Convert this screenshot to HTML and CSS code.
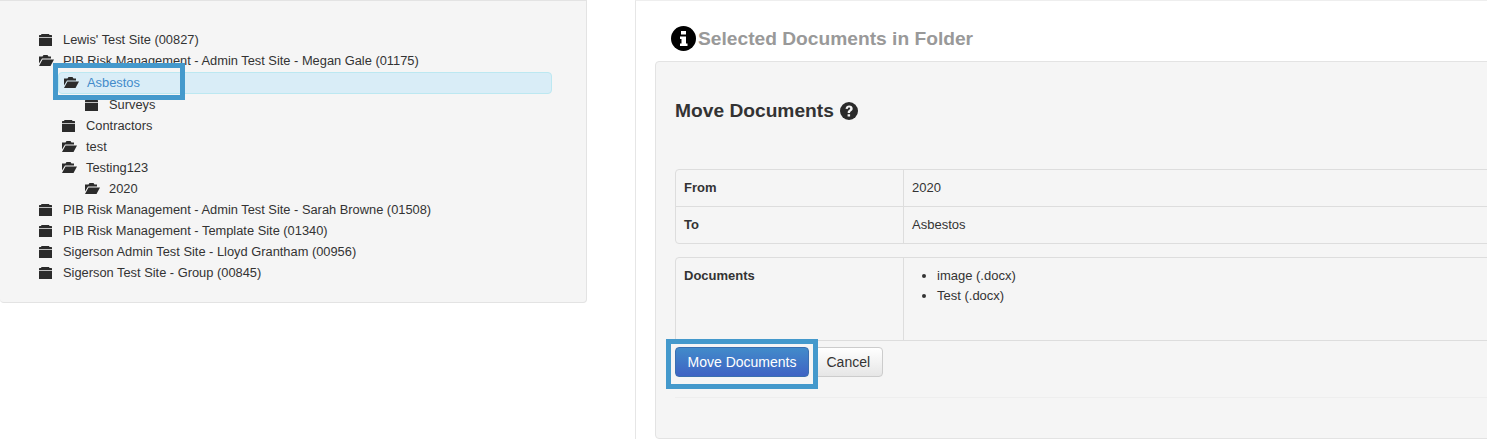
FILE: index.html
```html
<!DOCTYPE html>
<html lang="en">
<head>
  <meta charset="UTF-8" />
  <title>Move Documents</title>
  <link rel="stylesheet" href="styles.css">
</head>
<body>
  <svg class="defs" width="0" height="0">
    <symbol id="closed" viewBox="0 0 13 12">
      <path d="M2.500 0h7.500l.5 1H12.500l.5.500V3H0V1.500L.5 1h1.500zM0 3.800h13V12H0z" fill="#2b2b2b"/>
    </symbol>
    <symbol id="open" viewBox="0 0 15 11">
      <path d="M0 1.500h3.500L4.500 0h4l1 1.500H12V3.500H3L0 8.500zM3.500 4.500H15L11.500 11H0z" fill="#2b2b2b"/>
    </symbol>
  </svg>

  <div class="left">
    <div class="tree-panel">
      <div class="row"><svg class="ic"><use href="#closed"/></svg>Lewis' Test Site (00827)</div>
      <div class="row"><svg class="ic open"><use href="#open"/></svg>PIB Risk Management - Admin Test Site - Megan Gale (01175)</div>
      <div class="row lvl1 selected"><svg class="ic open"><use href="#open"/></svg>Asbestos</div>
      <div class="row lvl2"><svg class="ic"><use href="#closed"/></svg>Surveys</div>
      <div class="row lvl1"><svg class="ic"><use href="#closed"/></svg>Contractors</div>
      <div class="row lvl1"><svg class="ic open"><use href="#open"/></svg>test</div>
      <div class="row lvl1"><svg class="ic open"><use href="#open"/></svg>Testing123</div>
      <div class="row lvl2"><svg class="ic open"><use href="#open"/></svg>2020</div>
      <div class="row"><svg class="ic"><use href="#closed"/></svg>PIB Risk Management - Admin Test Site - Sarah Browne (01508)</div>
      <div class="row"><svg class="ic"><use href="#closed"/></svg>PIB Risk Management - Template Site (01340)</div>
      <div class="row"><svg class="ic"><use href="#closed"/></svg>Sigerson Admin Test Site - Lloyd Grantham (00956)</div>
      <div class="row"><svg class="ic"><use href="#closed"/></svg>Sigerson Test Site - Group (00845)</div>
      <div class="callout callout-tree"></div>
    </div>
  </div>

  <div class="right">
    <div class="title">
      <svg class="info" viewBox="0 0 25 25">
        <circle cx="12.500" cy="12.500" r="12.500" fill="#000"/>
        <path d="M10 5h5v3.500h-5zM9 10.500h6v7h1.500V20h-7.500v-2.500H10.500v-4.500H9z" fill="#fff"/>
      </svg>
      <span>Selected Documents in Folder</span>
    </div>
    <div class="well">
      <h3>Move Documents
        <svg class="help" viewBox="0 0 18 18">
          <circle cx="9" cy="9" r="9" fill="#2b2b2b"/>
          <path d="M5.500 6.800C5.800 4.700 7.200 3.500 9.200 3.500c2.100 0 3.500 1.300 3.500 3 0 1.400-.8 2.100-1.700 2.700-.7.500-1 .8-1 1.500v.3H7.700v-.6c0-1.100.5-1.700 1.300-2.300.7-.5 1.200-.9 1.200-1.500 0-.6-.4-1-1.100-1-.7 0-1.200.4-1.400 1.300zM7.600 12.200h2.500v2.400H7.600z" fill="#f5f5f5"/>
        </svg>
      </h3>
      <table class="info-table first">
        <tr><th>From</th><td>2020</td></tr>
        <tr><th>To</th><td>Asbestos</td></tr>
      </table>
      <table class="info-table docs">
        <tr>
          <th>Documents</th>
          <td>
            <ul>
              <li>image (.docx)</li>
              <li>Test (.docx)</li>
            </ul>
          </td>
        </tr>
      </table>
      <div class="actions">
        <button class="btn primary">Move Documents</button>
        <button class="btn">Cancel</button>
        <div class="callout callout-btn"></div>
      </div>
      <hr>
    </div>
  </div>
</body>
</html>
```

FILE: styles.css
```css
html, body {
  height: 100%;
}
body {
  margin: 0;
  display: flex;
  overflow: hidden;
  background: #fff;
  color: #333;
  font-family: "Liberation Sans", Arial, sans-serif;
  font-size: 12.850px;
}
.defs {
  position: absolute;
}
.left {
  width: 587px;
  flex: none;
}
.tree-panel {
  position: relative;
  box-sizing: border-box;
  height: 303px;
  padding: 28px 34px 0 39px;
  background: #f5f5f5;
  border: 1px solid #e3e3e3;
  border-left: 0;
  border-radius: 0 0 4px 4px;
}
.row {
  display: flex;
  align-items: center;
  height: 21px;
  line-height: 21px;
  white-space: nowrap;
  color: #333;
}
.ic {
  width: 13px;
  height: 12px;
  margin-right: 11px;
  flex: none;
}
.ic.open {
  width: 15px;
  height: 11px;
  margin-right: 9px;
}
.lvl1 {
  padding-left: 23px;
}
.lvl2 {
  padding-left: 46px;
}
.selected {
  height: 22px;
  margin: 1px 0 0 19px;
  box-sizing: border-box;
  background: #d9edf7;
  border: 1px solid #bce8f1;
  border-radius: 4px;
  color: #428bca;
  padding: 0 0 2px 5px;
}
.selected .ic.open {
  margin-right: 8px;
}
.callout {
  position: absolute;
  box-sizing: border-box;
  border: 5px solid #4499cc;
  pointer-events: none;
}
.callout-tree {
  left: 53px;
  top: 62px;
  width: 132px;
  height: 37px;
}
.right {
  flex: 1;
  margin-left: 48px;
  padding-left: 19px;
  border-left: 1px solid #e6e6e6;
  border-top: 1px solid #eee;
  min-width: 0;
}
.title {
  display: flex;
  align-items: center;
  gap: 2px;
  height: 25px;
  margin: 25px 0 10px 16px;
  font-size: 19.200px;
  font-weight: bold;
  color: #999;
}
.info {
  width: 25px;
  height: 25px;
  flex: none;
}
.well {
  box-sizing: border-box;
  height: 378px;
  width: 900px;
  padding: 1px 19px;
  background: #f5f5f5;
  border: 1px solid #e3e3e3;
  border-radius: 4px;
}
h3 {
  display: flex;
  align-items: center;
  gap: 6px;
  margin: 37px 0 47px;
  height: 22px;
  font-size: 19.200px;
  font-weight: bold;
  color: #333;
}
.help {
  width: 18px;
  height: 18px;
}
.info-table {
  width: 100%;
  border-collapse: separate;
  border-spacing: 0;
  border: 1px solid #ddd;
  border-radius: 4px;
  font-size: 13px;
}
.info-table th,
.info-table td {
  box-sizing: border-box;
  padding: 8px;
  text-align: left;
  vertical-align: top;
  line-height: 20px;
}
.info-table th {
  width: 228px;
  font-weight: bold;
  border-right: 1px solid #ddd;
}
.info-table tr + tr th,
.info-table tr + tr td {
  border-top: 1px solid #ddd;
}
.docs {
  margin-top: 13px;
  height: 84px;
  border-bottom-left-radius: 0;
  border-bottom-right-radius: 0;
}
.docs ul {
  margin: 0;
  padding-left: 25px;
}
.actions {
  position: relative;
  display: flex;
  gap: 5px;
  margin-top: 6px;
}
.btn {
  height: 30px;
  padding: 0 11.500px;
  font-family: inherit;
  font-size: 14px;
  color: #333;
  background: linear-gradient(#fff, #e6e6e6);
  border: 1px solid #ccc;
  border-radius: 4px;
}
.primary {
  width: 134px;
  padding: 0;
  color: #fff;
  background: linear-gradient(#428bca, #3f63c4);
  border-color: #3a6fb0;
}
.callout-btn {
  left: -9px;
  top: -8px;
  width: 152px;
  height: 50px;
}
hr {
  margin: 20px 0 0;
  border: 0;
  border-top: 1px solid #eee;
}
```
